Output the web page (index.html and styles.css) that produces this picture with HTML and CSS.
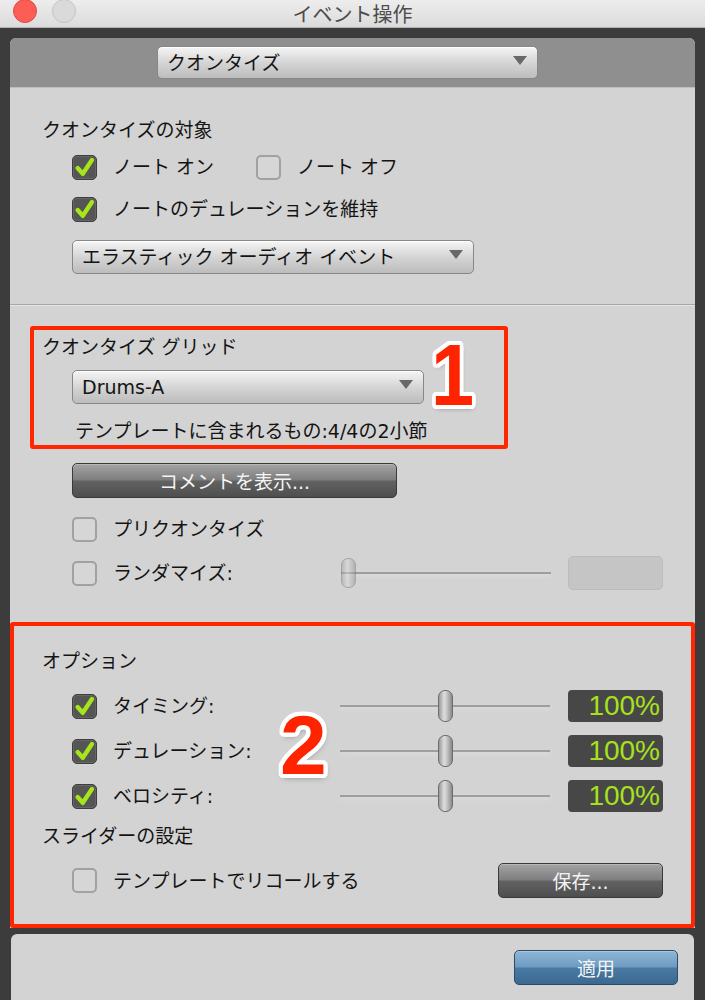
FILE: index.html
```html
<!DOCTYPE html>
<html>
<head>
    <meta charset="utf-8">
    <title>イベント操作</title>
    <link rel="stylesheet" href="styles.css">
</head>
<body>
    <div class="titlebar">
        <div class="lights">
            <span class="light light-close"></span>
            <span class="light light-idle"></span>
        </div>
        <div class="title">イベント操作</div>
        <div></div>
    </div>

    <div class="window">
        <div class="panel">
            <div class="panel-head">
                <div class="select select-mode">クオンタイズ</div>
            </div>

            <!-- what gets quantized -->
            <div class="section section-target">
                <div class="heading">クオンタイズの対象</div>
                <div class="row row-first">
                    <label class="check check-wide"><span class="box on"><svg viewBox="0 0 20 20"><path d="M4 10.5 L8.5 15.5 L16.5 3.5"/></svg></span>ノート オン</label>
                    <label class="check"><span class="box"></span>ノート オフ</label>
                </div>
                <div class="row row-second">
                    <label class="check"><span class="box on"><svg viewBox="0 0 20 20"><path d="M4 10.5 L8.5 15.5 L16.5 3.5"/></svg></span>ノートのデュレーションを維持</label>
                </div>
                <div class="select select-elastic">エラスティック オーディオ イベント</div>
            </div>

            <!-- grid / groove template -->
            <div class="section section-grid">
                <div class="callout callout-grid">
                    <div class="heading">クオンタイズ グリッド</div>
                    <div class="select select-grid">Drums-A</div>
                    <div class="note">テンプレートに含まれるもの:4/4の2小節</div>
                    <span class="marker marker-one">1</span>
                </div>
                <button class="btn btn-dark btn-comment">コメントを表示...</button>
                <div class="row row-pre">
                    <label class="check"><span class="box"></span>プリクオンタイズ</label>
                </div>
                <div class="slider-row row-random">
                    <label class="check"><span class="box"></span>ランダマイズ:</label>
                    <div class="slider disabled"><span class="thumb" style="left: 0%"></span></div>
                    <div class="value value-off"></div>
                </div>
            </div>

            <!-- options -->
            <div class="callout callout-options">
                <div class="heading">オプション</div>
                <div class="slider-row opt-first">
                    <label class="check"><span class="box on"><svg viewBox="0 0 20 20"><path d="M4 10.5 L8.5 15.5 L16.5 3.5"/></svg></span>タイミング:</label>
                    <div class="slider"><span class="thumb" style="left: 50%"></span></div>
                    <div class="value">100%</div>
                </div>
                <div class="slider-row">
                    <label class="check"><span class="box on"><svg viewBox="0 0 20 20"><path d="M4 10.5 L8.5 15.5 L16.5 3.5"/></svg></span>デュレーション:</label>
                    <div class="slider"><span class="thumb" style="left: 50%"></span></div>
                    <div class="value">100%</div>
                </div>
                <div class="slider-row">
                    <label class="check"><span class="box on"><svg viewBox="0 0 20 20"><path d="M4 10.5 L8.5 15.5 L16.5 3.5"/></svg></span>ベロシティ:</label>
                    <div class="slider"><span class="thumb" style="left: 50%"></span></div>
                    <div class="value">100%</div>
                </div>
                <div class="heading heading-slider">スライダーの設定</div>
                <div class="row row-recall">
                    <label class="check"><span class="box"></span>テンプレートでリコールする</label>
                    <button class="btn btn-dark btn-save">保存...</button>
                </div>
                <span class="marker marker-two">2</span>
            </div>
        </div>

        <div class="footer">
            <button class="btn btn-apply">適用</button>
        </div>
    </div>
</body>
</html>
```

FILE: styles.css
```css
* {
    box-sizing: border-box;
}

body {
    margin: 0;
    width: 705px;
    height: 1000px;
    overflow: hidden;
    background-color: #3c3c3c;
    color: #141414;
    font-family: "DejaVu Sans", "Noto Sans CJK JP", sans-serif;
    font-size: 19px;
}

/* title bar */
.titlebar {
    height: 28px;
    background: linear-gradient(#ededed, #dcdcdc);
    border-bottom: 1px solid #b4b4b4;
    display: grid;
    grid-template-columns: 1fr auto 1fr;
}

.lights {
    display: flex;
    gap: 15px;
    padding-left: 13px;
}

.light {
    width: 24px;
    height: 24px;
    margin-top: -1px;
    border-radius: 50%;
}

.light-close {
    background-color: #fc5e56;
    border: 1px solid #e4463e;
}

.light-idle {
    background-color: #dadada;
    border: 1px solid #c4c4c4;
}

.title {
    font-family: "Noto Sans CJK JP", sans-serif;
    font-size: 20px;
    line-height: 27px;
    color: #4c4c4c;
}

/* main window */
.window {
    padding: 10px 10px 0;
}

.panel {
    background-color: #d3d3d3;
    border-radius: 6px 6px 0 0;
}

.panel-head {
    height: 50px;
    padding: 8px 0 0 147px;
    background-color: #8f8f8f;
    border-radius: 6px 6px 0 0;
    border-bottom: 1px solid #bdbdbd;
}

.section {
    padding: 0 32px;
}

.heading {
    line-height: 26px;
    height: 26px;
}

.row {
    display: flex;
    align-items: center;
    padding-left: 30px;
    height: 26px;
}

.check {
    display: flex;
    align-items: center;
    gap: 16px;
    line-height: 26px;
}

.check-wide {
    width: 184px;
}

.box {
    width: 25px;
    height: 25px;
    flex: none;
    border: 2px solid #a1a1a1;
    border-radius: 5px;
    background-color: #d6d6d6;
}

.box.on {
    border: 1px solid #3e3e3e;
    background-color: #555;
    box-shadow: inset 0 0 0 1px #666;
}

.box svg {
    display: block;
    width: 23px;
    height: 23px;
}

.box path {
    fill: none;
    stroke: #a6e51a;
    stroke-width: 3.8;
    stroke-linecap: round;
    stroke-linejoin: round;
}

/* pop-up menus */
.select {
    position: relative;
    height: 34px;
    padding-left: 9px;
    line-height: 32px;
    border: 1px solid #878787;
    border-radius: 5px;
    background: linear-gradient(#f5f5f5, #d2d2d2 55%, #bdbdbd);
    box-shadow: inset 0 1px 0 #fff;
}

.select::after {
    content: "";
    position: absolute;
    right: 10px;
    top: 9px;
    border-left: 7px solid transparent;
    border-right: 7px solid transparent;
    border-top: 9px solid #686868;
}

.select-mode {
    width: 381px;
    height: 33px;
}

.select-elastic {
    width: 402px;
    margin: 18px 0 0 30px;
}

.select-grid {
    width: 352px;
    margin: 10px 0 0 30px;
}

.section-target {
    padding-top: 29px;
    padding-bottom: 30px;
    border-bottom: 1px solid #a6a6a6;
    box-shadow: 0 1px 0 #e4e4e4;
}

.row-first {
    margin-top: 11px;
}

.row-second {
    margin-top: 16px;
}

/* annotated frames */
.callout {
    position: relative;
    border: 4px solid #ff2600;
    border-radius: 3px;
}

.callout-grid {
    width: 478px;
    margin: 21px 0 0 -12px;
    padding: 4px 8px 1px;
}

.note {
    margin: 14px 0 0 33px;
    line-height: 26px;
}

.marker {
    position: absolute;
    font-family: "Liberation Sans", sans-serif;
    font-weight: bold;
    line-height: 1;
    color: #ff2400;
    text-shadow: 4px 0 #fff, -4px 0 #fff, 0 4px #fff, 0 -4px #fff,
        3px 3px #fff, -3px 3px #fff, 3px -3px #fff, -3px -3px #fff,
        4px 2px #fff, -4px 2px #fff, 4px -2px #fff, -4px -2px #fff,
        2px 4px #fff, -2px 4px #fff, 2px -4px #fff, -2px -4px #fff,
        1px 3px 6px rgba(0, 0, 0, 0.45);
}

.marker-one {
    font-size: 88px;
    left: 394px;
    top: 1px;
    transform: scaleX(0.88);
}

.marker-two {
    font-size: 84px;
    left: 266px;
    top: 77px;
}

/* buttons */
.btn {
    display: block;
    height: 35px;
    padding: 0;
    font-family: "DejaVu Sans", "Noto Sans CJK JP", sans-serif;
    font-size: 19px;
    color: #f4f4f4;
    border-radius: 5px;
}

.btn-dark {
    border: 1px solid #3a3a3a;
    background: linear-gradient(#a4a4a4, #7e7e7e 48%, #626262 52%, #4e4e4e);
    box-shadow: inset 0 1px 0 #b8b8b8;
}

.btn-comment {
    width: 325px;
    margin: 14px 0 0 30px;
}

.btn-save {
    width: 165px;
    margin-left: auto;
}

.btn-apply {
    width: 164px;
    border: 1px solid #2a4c69;
    background: linear-gradient(#90b6d6, #6d9bc3 48%, #4a7aa2 52%, #3a6891);
    box-shadow: inset 0 1px 0 #a9c8e2;
}

.section-grid {
    padding-bottom: 32px;
}

.row-pre {
    margin-top: 18px;
}

/* slider rows */
.slider-row {
    display: flex;
    align-items: center;
    height: 32px;
    padding-left: 30px;
}

.slider-row .check {
    flex: 1;
}

.slider {
    position: relative;
    width: 210px;
    height: 32px;
    margin-right: 18px;
}

.slider::before {
    content: "";
    position: absolute;
    left: 0;
    right: 0;
    top: 15px;
    height: 2px;
    background-color: #9e9e9e;
    box-shadow: 0 2px 4px #e2e2e2;
}

.thumb {
    position: absolute;
    top: 0;
    width: 15px;
    height: 32px;
    margin-left: -7px;
    border: 1px solid #6c6c6c;
    border-radius: 7px;
    background: linear-gradient(90deg, #9a9a9a, #dedede 40%, #c6c6c6 60%, #8a8a8a);
}

.slider.disabled .thumb {
    margin-left: 0;
    top: 1px;
    height: 30px;
    opacity: 0.45;
}

.value {
    width: 95px;
    height: 32px;
    padding-right: 3px;
    text-align: right;
    font-family: "Liberation Sans", sans-serif;
    font-size: 28px;
    line-height: 32px;
    color: #a6e21c;
    background-color: #474747;
    border-radius: 4px;
}

.value-off {
    height: 34px;
    background-color: #c5c5c5;
    border: 1px solid #bcbcbc;
    border-radius: 5px;
}

.row-random {
    height: 34px;
    margin-top: 14px;
}

.row-random .slider {
    margin-right: 17px;
}

.callout-options {
    padding: 22px 28px 26px;
}

.callout-options .slider-row {
    margin-top: 13px;
}

.callout-options .opt-first {
    margin-top: 16px;
}

.heading-slider {
    margin-top: 11px;
}

.row-recall {
    height: 35px;
    margin-top: 14px;
}

/* bottom bar */
.footer {
    height: 80px;
    margin: 6px 1px 0;
    padding: 16px 16px 0 0;
    display: flex;
    justify-content: flex-end;
    align-items: flex-start;
    background-color: #d3d3d3;
    border-radius: 6px 6px 0 0;
}
```
